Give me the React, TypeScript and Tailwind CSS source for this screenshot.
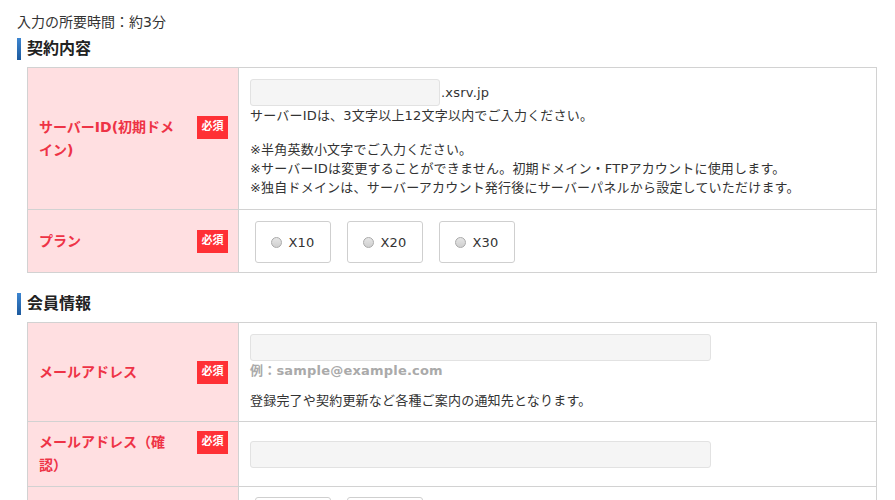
import { ReactNode } from 'react'

const fuente = { fontFamily: '"DejaVu Sans", "Noto Sans CJK JP", sans-serif' }

function Titulo({ children }: { children: ReactNode }) {
  return (
    <div className="flex items-center h-[22px]">
      <span className="block w-[4px] h-[22px] bg-gradient-to-b from-[#3d86d1] to-[#1d5a9e]" />
      <h2 className="pl-[6px] text-[16px] font-bold text-[#222] leading-[22px]">{children}</h2>
    </div>
  )
}

function Fila({ label, children, last, relleno = 'py-[11px]' }: { label: string; children: ReactNode; last?: boolean; relleno?: string }) {
  return (
    <div className={`flex ${last ? '' : 'border-b border-[#d2d2d2]'}`}>
      <div className="w-[211px] shrink-0 bg-[#ffdfe1] border-r border-[#d2d2d2] flex items-center pl-[11px] pr-[10px] py-[9px]">
        <div className="flex items-start gap-[12px] w-full">
          <span className="flex-1 text-[14px] font-bold leading-[23px] text-[#ee3346]">{label}</span>
          <span className="shrink-0 w-[31px] h-[23px] bg-[#ff3035] text-white text-[11px] font-bold flex items-center justify-center">必須</span>
        </div>
      </div>
      <div className={`flex-1 flex flex-col justify-center px-[11px] ${relleno} text-[13px] leading-[19px] tracking-[0.2px] text-[#333]`}>
        {children}
      </div>
    </div>
  )
}

function Entrada({ ancho }: { ancho: string }) {
  return <div className={`${ancho} h-[27px] bg-[#f5f5f5] border border-[#e2e2e2] rounded-[3px]`} />
}

function Opcion({ texto }: { texto?: string }) {
  return (
    <label className="w-[76px] h-[42px] border border-[#cfcfcf] rounded-[3px] bg-white flex items-center justify-center gap-[6px]">
      <span className="w-[11px] h-[11px] rounded-full border border-[#aaa] bg-gradient-to-b from-[#e6e6e6] to-[#cfcfcf]" />
      {texto && <span className="text-[13px] text-[#333]">{texto}</span>}
    </label>
  )
}

export default function App() {
  return (
    <div style={fuente} className="bg-white w-[895px] h-[500px] overflow-hidden pl-[17px] pt-[12px] text-[#333]">
      <p className="text-[14px] leading-[20px]">入力の所要時間：約3分</p>

      <div className="mt-[6px]">
        <Titulo>契約内容</Titulo>
      </div>
      <div className="ml-[10px] mt-[7px] w-[850px] border border-[#d2d2d2]">
        <Fila label="サーバーID(初期ドメイン)" relleno="pt-[11px] pb-[12px]">
          <div className="flex items-center gap-[1px]">
            <Entrada ancho="w-[190px]" />
            <span>.xsrv.jp</span>
          </div>
          <p>サーバーIDは、3文字以上12文字以内でご入力ください。</p>
          <div className="mt-[15px]">
            <p>※半角英数小文字でご入力ください。</p>
            <p>※サーバーIDは変更することができません。初期ドメイン・FTPアカウントに使用します。</p>
            <p>※独自ドメインは、サーバーアカウント発行後にサーバーパネルから設定していただけます。</p>
          </div>
        </Fila>
        <Fila label="プラン" last relleno="pt-[11px] pb-[9px]">
          <div className="flex gap-[16px] pl-[5px]">
            <Opcion texto="X10" />
            <Opcion texto="X20" />
            <Opcion texto="X30" />
          </div>
        </Fila>
      </div>

      <div className="mt-[20px]">
        <Titulo>会員情報</Titulo>
      </div>
      <div className="ml-[10px] mt-[7px] w-[850px] border border-[#d2d2d2]">
        <Fila label="メールアドレス">
          <Entrada ancho="w-[461px]" />
          <p className="font-bold text-[#aaa]">例：sample@example.com</p>
          <p className="mt-[11px]">登録完了や契約更新など各種ご案内の通知先となります。</p>
        </Fila>
        <Fila label="メールアドレス（確認）">
          <Entrada ancho="w-[461px]" />
        </Fila>
        <div className="flex h-[60px]">
          <div className="w-[211px] shrink-0 bg-[#ffdfe1] border-r border-[#d2d2d2]" />
          <div className="flex-1 flex items-start gap-[16px] pl-[16px] pt-[10px]">
            <Opcion />
            <Opcion />
          </div>
        </div>
      </div>
    </div>
  )
}
